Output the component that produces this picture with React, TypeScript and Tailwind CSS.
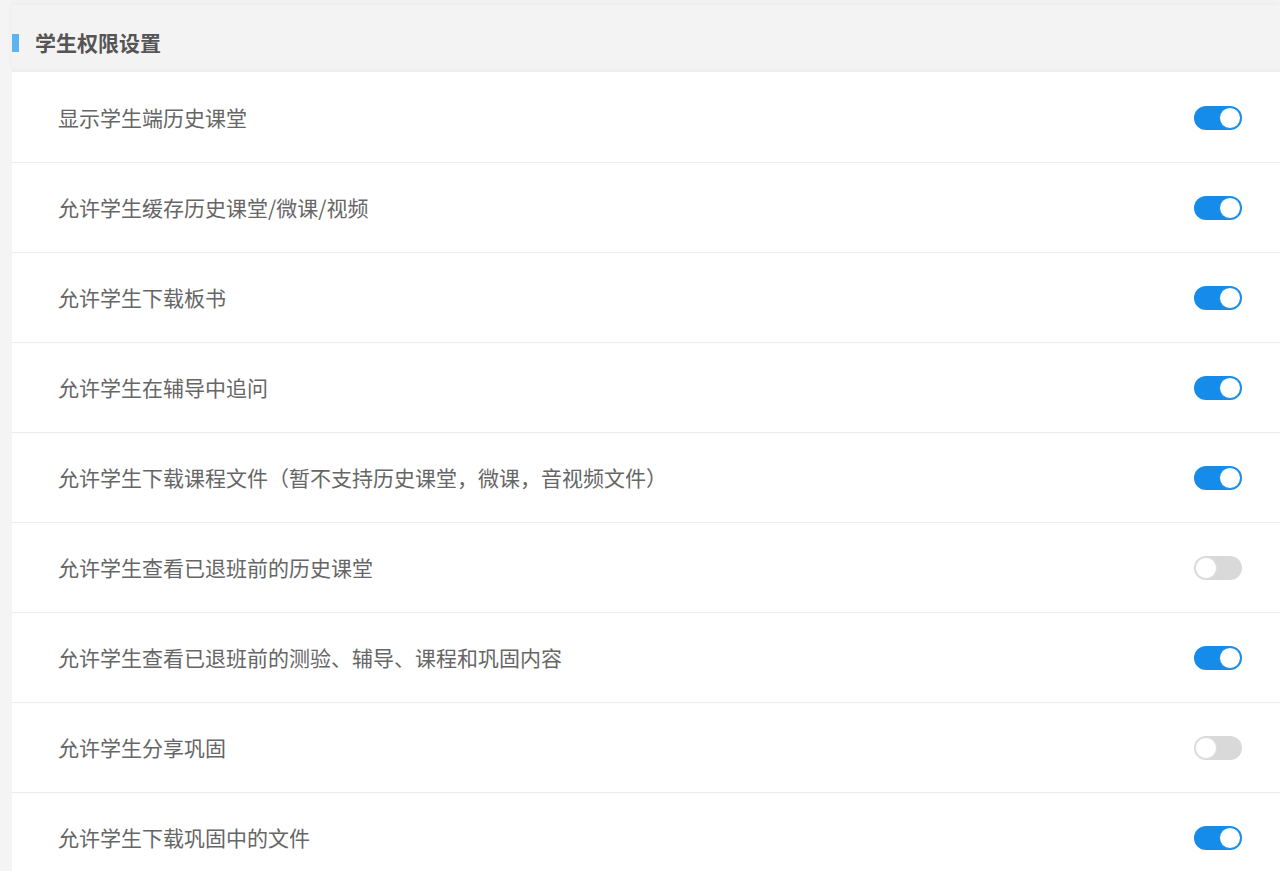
import { useState } from 'react'

type Item = { label: string; on: boolean }

const ITEMS: Item[] = [
  { label: '显示学生端历史课堂', on: true },
  { label: '允许学生缓存历史课堂/微课/视频', on: true },
  { label: '允许学生下载板书', on: true },
  { label: '允许学生在辅导中追问', on: true },
  { label: '允许学生下载课程文件（暂不支持历史课堂，微课，音视频文件）', on: true },
  { label: '允许学生查看已退班前的历史课堂', on: false },
  { label: '允许学生查看已退班前的测验、辅导、课程和巩固内容', on: true },
  { label: '允许学生分享巩固', on: false },
  { label: '允许学生下载巩固中的文件', on: true },
]

function Toggle({ on, onChange }: { on: boolean; onChange: () => void }) {
  return (
    <button
      onClick={onChange}
      className={`relative w-[48px] h-[24px] rounded-full transition-colors ${on ? 'bg-[#158cea]' : 'bg-[#d9d9d9]'}`}
    >
      <span
        className={`absolute top-[1px] w-[22px] h-[22px] rounded-full bg-white border transition-all ${
          on ? 'left-[25px] border-[#158cea]' : 'left-[1px] border-[#e0e0e0]'
        }`}
      />
    </button>
  )
}

export default function App() {
  const [items, setItems] = useState(ITEMS)

  const toggle = (i: number) => {
    setItems((prev) => prev.map((it, idx) => (idx === i ? { ...it, on: !it.on } : it)))
  }

  return (
    <div
      className="min-h-screen bg-[#f4f4f4] pt-[5px] pl-[12px] overflow-hidden"
      style={{ fontFamily: '"Noto Sans CJK SC", "Noto Sans", sans-serif' }}
    >
      {/* 标题 */}
      <div className="h-[67px] pt-[8px] flex items-center bg-[#f3f3f3] shadow-[0_-2px_6px_rgba(0,0,0,0.04),inset_0_-4px_6px_-4px_rgba(0,0,0,0.06)]">
        <span className="w-[7px] h-[18px] bg-[#5bb4f0] mr-[16px]" />
        <h2 className="text-[21px] font-bold text-[#555] leading-none">学生权限设置</h2>
      </div>

      {/* 列表 */}
      <div className="bg-white pt-[1px]">
        {items.map((item, i) => (
          <div
            key={item.label}
            className="h-[90px] flex items-center justify-between pl-[46px] pr-[38px] border-b border-[#e9edf3]"
          >
            <span className="text-[21px] text-[#666] leading-none">{item.label}</span>
            <Toggle on={item.on} onChange={() => toggle(i)} />
          </div>
        ))}
      </div>
    </div>
  )
}
